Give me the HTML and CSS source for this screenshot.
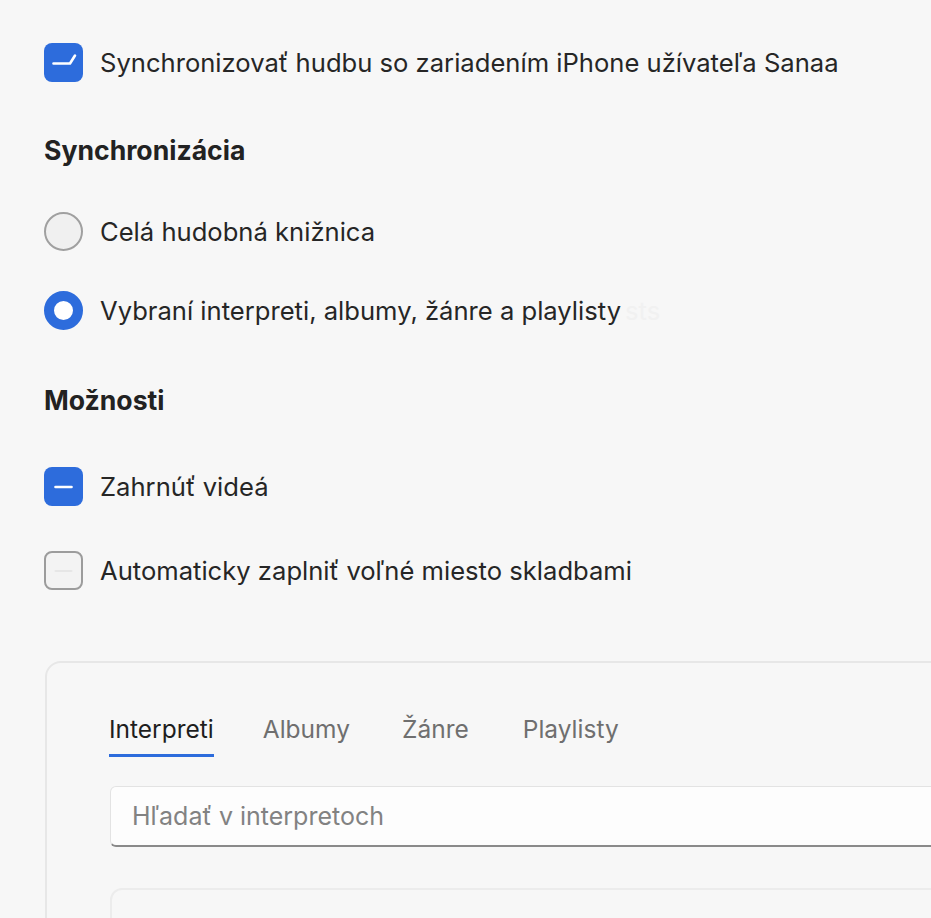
FILE: index.html
```html
<!DOCTYPE html>
<html lang="sk">
<head>
<meta charset="utf-8">
<title>Synchronizácia hudby</title>
<link rel="stylesheet" href="styles.css">
</head>
<body>
<main class="page">
  <label class="row row-first">
    <span class="box box-on">
      <svg viewBox="0 0 39 39" width="39" height="39"><path d="M9.5 20.5 H26 L31 12.5" fill="none" stroke="#fff" stroke-width="2.6" stroke-linecap="round" stroke-linejoin="round"/></svg>
    </span>
    <span class="label">Synchronizovať hudbu so zariadením iPhone užívateľa Sanaa</span>
  </label>

  <h2 class="heading h-sync">Synchronizácia</h2>

  <label class="row row-r1">
    <span class="radio"></span>
    <span class="label">Celá hudobná knižnica</span>
  </label>

  <label class="row row-r2">
    <span class="radio radio-on"></span>
    <span class="label">Vybraní interpreti, albumy, žánre a playlisty<span class="ghost ghost-sts">sts</span></span>
  </label>

  <h2 class="heading h-opt">Možnosti</h2>

  <label class="row row-c1">
    <span class="box box-on">
      <svg viewBox="0 0 39 39" width="39" height="39"><path d="M11.5 20 H27.5" fill="none" stroke="#fff" stroke-width="2.6" stroke-linecap="round"/></svg>
    </span>
    <span class="label">Zahrnúť videá</span>
  </label>

  <label class="row row-c2">
    <span class="box box-off">
      <svg viewBox="0 0 39 39" width="39" height="39"><path d="M11.5 20 H27.5" fill="none" stroke="#e6e6e6" stroke-width="2" stroke-linecap="round"/></svg>
    </span>
    <span class="label">Automaticky zaplniť voľné miesto skladbami</span>
  </label>

  <section class="card">
    <nav class="tabs">
      <span class="tab tab-active">Interpreti</span>
      <span class="tab tab-albums">Albumy</span>
      <span class="tab tab-genres">Žánre</span>
      <span class="tab tab-last">Playlisty</span>
    </nav>
    <div class="search">Hľadať v interpretoch</div>
    <div class="list"></div>
  </section>
</main>
</body>
</html>
```

FILE: styles.css
```css
html, body {
  margin: 0;
  padding: 0;
  background: #f7f7f7;
  overflow: hidden;
  height: 918px;
}

.page {
  font-family: Inter, "Noto Sans", "Liberation Sans", sans-serif;
  color: #262626;
  padding: 43px 0 0 44px;
  font-size: 25.6px;
}

.row {
  display: flex;
  align-items: center;
  gap: 17px;
  height: 39px;
}

.label {
  line-height: 32px;
  white-space: nowrap;
}

.ghost {
  color: #f1f1f1;
}
.ghost-sts { margin-left: 4px; }

.box {
  width: 39px;
  height: 39px;
  box-sizing: border-box;
  border-radius: 8px;
  flex: none;
  display: block;
}
.box svg { display: block; }
.box-on {
  background: #2d6cdc;
}
.box-off {
  background: #f3f3f3;
  border: 2px solid #9c9c9c;
}
.box-off svg { margin: -2px; }

.radio {
  width: 39px;
  height: 39px;
  box-sizing: border-box;
  border-radius: 50%;
  flex: none;
  background: #f0f0f0;
  border: 2px solid #a0a0a0;
}
.radio-on {
  background: #fff;
  border: 10px solid #2d6cdc;
}

.heading {
  margin: 0;
  font-size: 26.6px;
  font-weight: 700;
  line-height: 32px;
  color: #222;
}

.h-sync { margin-top: 52px; }
.row-r1 { margin-top: 46px; }
.row-r2 { margin-top: 40px; }
.h-opt { margin-top: 54px; }
.row-c1 { margin-top: 51px; }
.row-c2 { margin-top: 45px; }

.card {
  margin-top: 71px;
  margin-left: 1px;
  width: 1000px;
  height: 400px;
  border: 2px solid #e7e7e7;
  border-radius: 16px;
  padding: 50px 0 0 62px;
  box-sizing: border-box;
}

.tabs {
  display: flex;
  align-items: flex-start;
  font-size: 24.5px;
  line-height: 32px;
  height: 44px;
}

.tab {
  color: #6f6f6f;
  white-space: nowrap;
}
.tab-active {
  color: #1e1e1e;
  padding-bottom: 9px;
  border-bottom: 3px solid #2d6cdc;
  margin-right: 49px;
}
.tab-albums { margin-right: 52px; }
.tab-genres { margin-right: 54px; }
.tab-last { margin-right: 0; }

.search {
  margin-top: 29px;
  margin-left: 1px;
  height: 61px;
  box-sizing: border-box;
  background: #fdfdfd;
  border: 1px solid #e3e3e3;
  border-bottom: 2px solid #8a8a8a;
  border-radius: 6px 0 0 6px;
  padding-left: 21px;
  display: flex;
  align-items: center;
  color: #828282;
  font-size: 25px;
}

.list {
  margin-top: 41px;
  margin-left: 1px;
  height: 100px;
  border: 2px solid #ececec;
  border-radius: 12px;
  background: #f7f7f7;
}
```
